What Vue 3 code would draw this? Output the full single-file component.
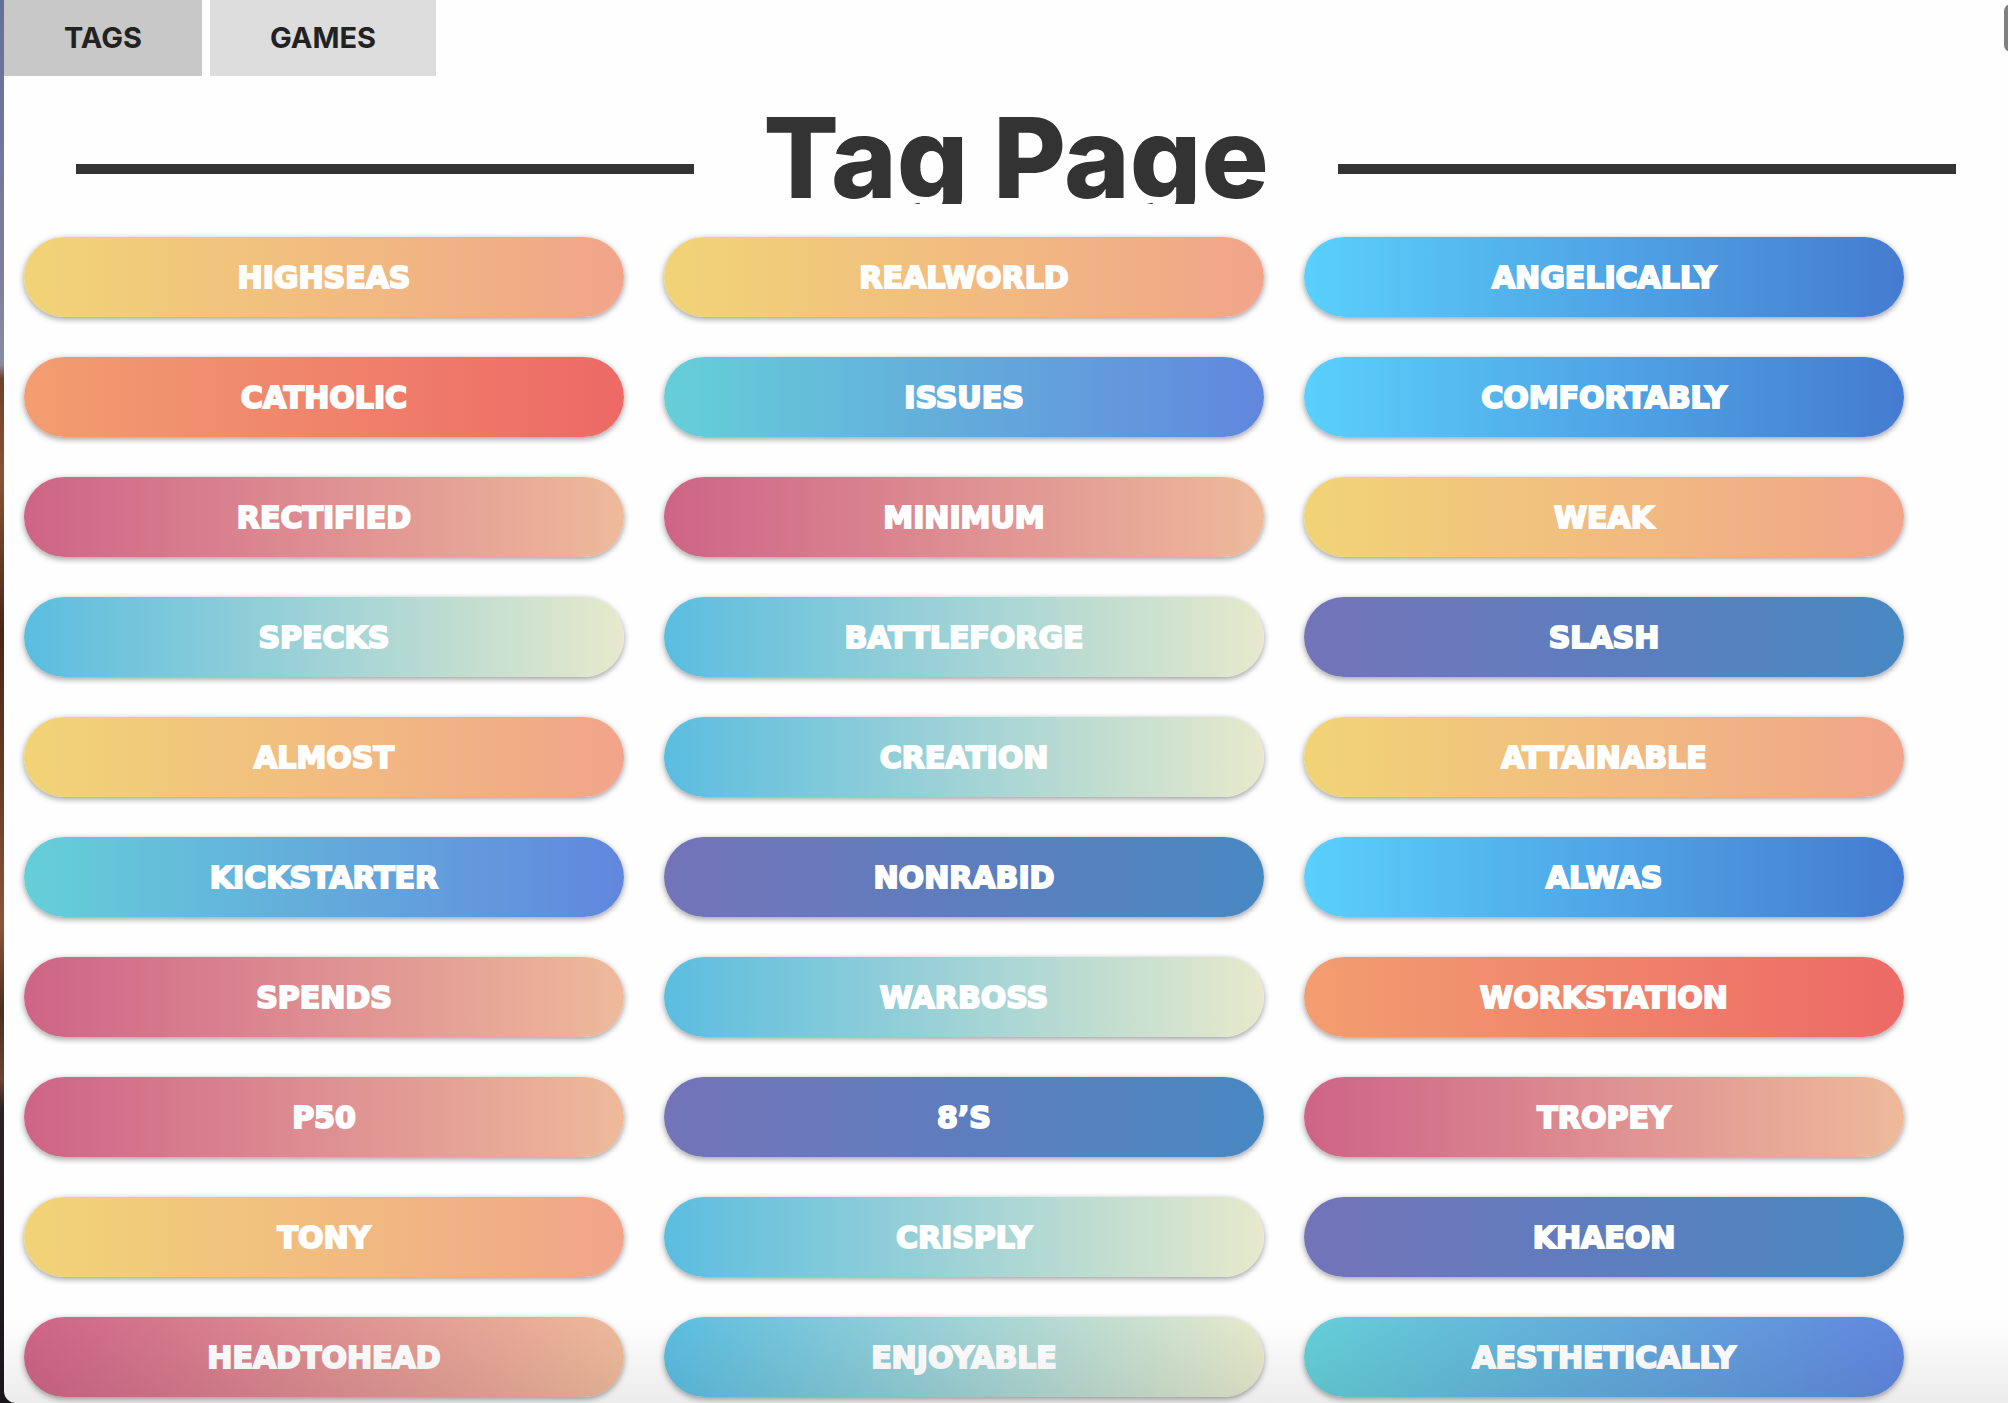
<script setup>
import { ref } from 'vue'

const tabs = ['TAGS', 'GAMES']
const active = ref('TAGS')

const tags = [
  ['HIGHSEAS', 'sand'], ['REALWORLD', 'sand'], ['ANGELICALLY', 'sky'],
  ['CATHOLIC', 'coral'], ['ISSUES', 'teal'], ['COMFORTABLY', 'sky'],
  ['RECTIFIED', 'rose'], ['MINIMUM', 'rose'], ['WEAK', 'sand'],
  ['SPECKS', 'aqua'], ['BATTLEFORGE', 'aqua'], ['SLASH', 'indigo'],
  ['ALMOST', 'sand'], ['CREATION', 'aqua'], ['ATTAINABLE', 'sand'],
  ['KICKSTARTER', 'teal'], ['NONRABID', 'indigo'], ['ALWAS', 'sky'],
  ['SPENDS', 'rose'], ['WARBOSS', 'aqua'], ['WORKSTATION', 'coral'],
  ['P50', 'rose'], ['8’S', 'indigo'], ['TROPEY', 'rose'],
  ['TONY', 'sand'], ['CRISPLY', 'aqua'], ['KHAEON', 'indigo'],
  ['HEADTOHEAD', 'rose'], ['ENJOYABLE', 'aqua'], ['AESTHETICALLY', 'teal'],
]
</script>

<template>
  <div class="desktop">
    <main class="window">
      <nav class="tabs">
        <button
          v-for="tab in tabs"
          :key="tab"
          type="button"
          class="tab"
          :class="{ active: tab === active }"
          @click="active = tab"
        >{{ tab }}</button>
      </nav>
      <header class="heading">
        <h1 class="title">Tag Page</h1>
      </header>
      <section class="tags">
        <button v-for="[name, tone] in tags" :key="name" type="button" class="tag" :class="tone">{{ name }}</button>
      </section>
      <div class="thumb"></div>
      <div class="fade"></div>
    </main>
  </div>
</template>

<style>
body {
  margin: 0;
}
</style>

<style scoped>
.desktop {
  padding-left: 4px;
  background: linear-gradient(#62719a 0%, #7e7f98 20%, #8b8ba0 26%, #6f4128 27%, #8a5335 34%, #4a2618 45%, #6a3d28 56%, #8a5638 66%, #4c2f24 72%, #6b4434 77%, #2a2326 79%, #19151a 100%);
}

.window {
  position: relative;
  overflow: hidden;
  padding-bottom: 6px;
  border-bottom-left-radius: 12px;
  background: #fefefe;
  font-family: Inter, "Liberation Sans", sans-serif;
}

.tabs {
  display: flex;
  gap: 8px;
}

.tab {
  height: 76px;
  padding: 0 60px;
  border: 0;
  background: #ddd;
  color: #222;
  font: 700 29px/76px Inter, "Liberation Sans", sans-serif;
}

.tab.active {
  background: #c8c8c8;
}

.heading {
  display: flex;
  align-items: center;
  margin: 26px 52px 0 72px;
  overflow: hidden;
}

.heading::before,
.heading::after {
  content: "";
  flex: 1;
  height: 10px;
  margin-top: 32px;
  background: #333;
}

.title {
  min-width: 644px;
  height: 102px;
  margin: 0;
  color: #333;
  font-size: 112px;
  font-weight: 800;
  line-height: 110px;
  text-align: center;
  white-space: nowrap;
}

.tags {
  display: grid;
  grid-template-columns: repeat(3, 1fr);
  gap: 40px;
  margin: 33px 104px 0 20px;
}

.tag {
  height: 80px;
  padding: 0 20px;
  border: 0;
  border-radius: 40px;
  color: #fff;
  font: 700 30px/82px "DejaVu Sans", sans-serif;
  -webkit-text-stroke: 2px #fff;
  box-shadow: 0 2px 6px rgba(0, 0, 0, 0.4);
}

.sand { background: linear-gradient(90deg, #f1d476, #f1a48a); }
.coral { background: linear-gradient(90deg, #f29e70, #ed6966); }
.rose { background: linear-gradient(90deg, #ce6488, #eeba9b); }
.aqua { background: linear-gradient(90deg, #5abde0, #e7e9cb); }
.sky { background: linear-gradient(90deg, #5ad0fb, #457bd0); }
.teal { background: linear-gradient(90deg, #65cfd8, #6187de); }
.indigo { background: linear-gradient(90deg, #7373b8, #4888c2); }

/* Scrollbar thumb, mostly past the window's right edge */
.thumb {
  position: absolute;
  top: 4px;
  right: -10px;
  width: 14px;
  height: 48px;
  border-radius: 7px;
  background: #808080;
}

.fade {
  position: absolute;
  right: 0;
  bottom: 0;
  left: 0;
  height: 84px;
  background: linear-gradient(transparent, rgba(0, 0, 0, 0.07));
  pointer-events: none;
}
</style>
